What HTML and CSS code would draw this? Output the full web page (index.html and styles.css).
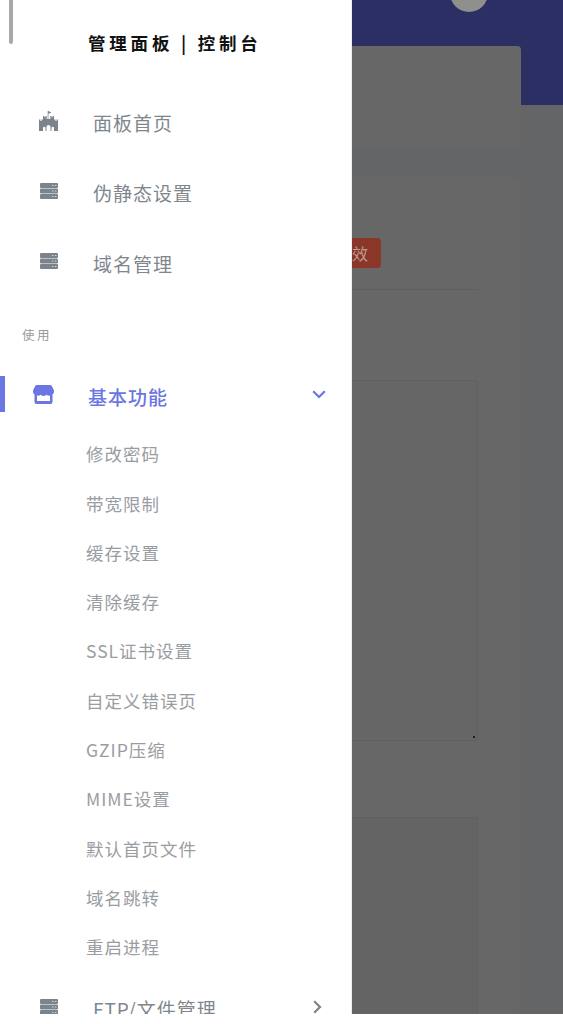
FILE: index.html
```html
<!DOCTYPE html>
<html>
	<head>
		<meta charset="utf-8">
		<title>管理面板</title>
		<link rel="stylesheet" href="styles.css">
	</head>
	<body>
		<svg class="defs" width="0" height="0">
			<symbol id="server" viewBox="0 0 18 16">
				<path d="M1 0h16a1 1 0 0 1 1 1v3a1 1 0 0 1-1 1H1a1 1 0 0 1-1-1V1a1 1 0 0 1 1-1zM1 5.500h16a1 1 0 0 1 1 1v3a1 1 0 0 1-1 1H1a1 1 0 0 1-1-1v-3a1 1 0 0 1 1-1zM1 11h16a1 1 0 0 1 1 1v3a1 1 0 0 1-1 1H1a1 1 0 0 1-1-1v-3a1 1 0 0 1 1-1z" fill="#7b838c"/>
				<path d="M12 2h1.500v1H12zM15 2h1.500v1H15zM12 7.500h1.500v1H12zM15 7.500h1.500v1H15zM12 13h1.500v1H12zM15 13h1.500v1H15z" fill="#d5d8db"/>
			</symbol>
		</svg>
		<div class="app">
			<aside class="drawer">
				<div class="scroll-thumb"></div>
				<div class="logo">管理面板 | 控制台</div>
				<a class="nav-item">
					<svg class="nav-icon castle" viewBox="0 0 19 20" width="19" height="20">
						<path d="M0 8.500h1.400V10h1.200V8.500H4V5h1.300v1.300h1.100V5h1.300v3h1V0h.7l3 1.400-3 1.400V8h1.900V5h1.300v1.300h1.100V5H15v3.500h1.400V10h1.200V8.500H19V20h-4v-3a1.250 1.250 0 0 0-2.500 0v3h-1v-4a2 2 0 0 0-4 0v4h-1v-3A1.250 1.250 0 0 0 4 17v3H0z" fill="#7b838c"/>
					</svg>
					<span>面板首页</span>
				</a>
				<a class="nav-item">
					<svg class="nav-icon" width="18" height="16"><use href="#server"/></svg>
					<span>伪静态设置</span>
				</a>
				<a class="nav-item">
					<svg class="nav-icon" width="18" height="16"><use href="#server"/></svg>
					<span>域名管理</span>
				</a>
				<div class="section-label">使用</div>
				<a class="nav-active">
					<svg class="active-icon" viewBox="0 0 21 19" width="21" height="19">
						<path d="M4 0h13a2 2 0 0 1 1.800 1.100L21 5.500V7a2.500 2.500 0 0 1-1.500 2.300V17a2 2 0 0 1-2 2h-14a2 2 0 0 1-2-2V9.300A2.500 2.500 0 0 1 0 7V5.500l2.200-4.400A2 2 0 0 1 4 0zM4 10.500V16h13v-5.500a4 4 0 0 1-3.500-.8 4.500 4.500 0 0 1-6 0 4 4 0 0 1-3.500.8z" fill="#6a76e2" fill-rule="evenodd"/>
					</svg>
					<span>基本功能</span>
					<svg class="chevron" viewBox="0 0 14 9" width="14" height="9">
						<path d="M1.200 1.200 7 7l5.800-5.800" fill="none" stroke="#6a76e2" stroke-width="2.200"/>
					</svg>
				</a>
				<ul class="sub-list">
					<li>修改密码</li>
					<li>带宽限制</li>
					<li>缓存设置</li>
					<li>清除缓存</li>
					<li>SSL证书设置</li>
					<li>自定义错误页</li>
					<li>GZIP压缩</li>
					<li>MIME设置</li>
					<li>默认首页文件</li>
					<li>域名跳转</li>
					<li>重启进程</li>
				</ul>
				<a class="nav-item nav-last">
					<svg class="nav-icon" width="18" height="16"><use href="#server"/></svg>
					<span>FTP/文件管理</span>
					<svg class="chevron-right" viewBox="0 0 9 14" width="9" height="14">
						<path d="M1.200 1.200 7 7l-5.800 5.800" fill="none" stroke="#7b838c" stroke-width="2.200"/>
					</svg>
				</a>
			</aside>
			<main class="content">
				<div class="topbar"><div class="avatar"></div></div>
				<div class="card card-head"></div>
				<div class="card card-body">
					<div class="status-row"><span class="badge">效</span></div>
					<div class="box box-first"><i class="grip"></i></div>
					<div class="box box-second"></div>
				</div>
			</main>
		</div>
	</body>
</html>
```

FILE: styles.css
```css
* {
	box-sizing: border-box;
}
html, body {
	margin: 0;
	background: #fff;
}
.defs {
	display: block;
	height: 0;
}
.app {
	display: flex;
	width: 563px;
	height: 1014px;
	overflow: hidden;
	font-family: "Noto Sans CJK SC", "Noto Sans", sans-serif;
}

/* drawer */
.drawer {
	position: relative;
	flex: none;
	width: 352px;
	height: 1014px;
	overflow: hidden;
	background: #fff;
	border-right: 1px solid #ececee;
}
.scroll-thumb {
	position: absolute;
	left: 9px;
	top: 0;
	width: 4px;
	height: 44px;
	background: #a8a8a8;
	border-radius: 0 0 2px 2px;
}
.logo {
	height: 88px;
	line-height: 86px;
	padding-left: 88px;
	font-size: 17.500px;
	font-weight: 700;
	letter-spacing: 3.800px;
	color: #111;
	white-space: nowrap;
}
.nav-item {
	display: flex;
	align-items: center;
	height: 70.500px;
	padding-left: 40px;
	font-size: 19px;
	letter-spacing: 1px;
	color: #7f868d;
}
.nav-item span {
	margin: -2px 0 0 35px;
}
.nav-icon {
	flex: none;
	margin-top: -6px;
}
.castle {
	margin: -4px 0 0 -1px;
}
.nav-last {
	margin-top: 3px;
}
.chevron-right {
	margin-left: auto;
	margin-right: 29px;
	margin-top: -5px;
}
.section-label {
	padding: 24px 0 0 22px;
	height: 76.500px;
	line-height: 21px;
	font-size: 12.500px;
	letter-spacing: 2.500px;
	color: #999;
}
.nav-active {
	display: flex;
	align-items: center;
	height: 36px;
	padding-left: 28px;
	border-left: 5px solid #6a76e2;
	font-size: 19px;
	font-weight: 500;
	letter-spacing: 1px;
	color: #6a76e2;
}
.active-icon {
	flex: none;
	margin-top: 1px;
}
.nav-active span {
	margin: 4px 0 0 34px;
}
.chevron {
	margin-left: auto;
	margin-right: 25px;
	margin-top: 1px;
}
.sub-list {
	list-style: none;
	margin: 0;
	padding: 17.300px 0 0 86px;
}
.sub-list li {
	height: 49.300px;
	line-height: 49.300px;
	font-size: 17.500px;
	letter-spacing: 1px;
	color: #999da2;
}

/* dimmed page behind the drawer */
.content {
	flex: 1;
	min-width: 0;
	height: 1014px;
	padding-right: 42px;
	overflow: hidden;
	background: #636566;
}
.topbar {
	display: flex;
	justify-content: flex-end;
	height: 105px;
	margin-right: -42px;
	background: #2b2f63;
}
.avatar {
	flex: none;
	width: 38px;
	height: 38px;
	margin: -26px 75px 0 0;
	border-radius: 50%;
	background: #8f8f8d;
}
.card {
	background: #676767;
	border-radius: 0 4px 4px 0;
}
.card-head {
	height: 103px;
	margin-top: -59px;
}
.card-body {
	height: 837px;
	margin-top: 28px;
	padding: 61px 43px 0 0;
}
.status-row {
	height: 52px;
	border-bottom: 1px solid #5d5e5f;
}
.badge {
	display: block;
	width: 29px;
	height: 30px;
	line-height: 30px;
	padding-right: 15px;
	text-align: right;
	font-size: 16px;
	color: #bb9a92;
	background: #8a3628;
	border-radius: 0 4px 4px 0;
}
.box {
	position: relative;
	border: 1px solid #5f6062;
	border-left: 0;
	border-radius: 0 4px 4px 0;
	background: #666;
}
.box-first {
	height: 361px;
	margin-top: 90px;
}
.box-second {
	height: 300px;
	margin-top: 76px;
	background: #646464;
}
.grip {
	position: absolute;
	right: 2px;
	bottom: 2px;
	width: 2px;
	height: 2px;
	background: #222;
}
```
